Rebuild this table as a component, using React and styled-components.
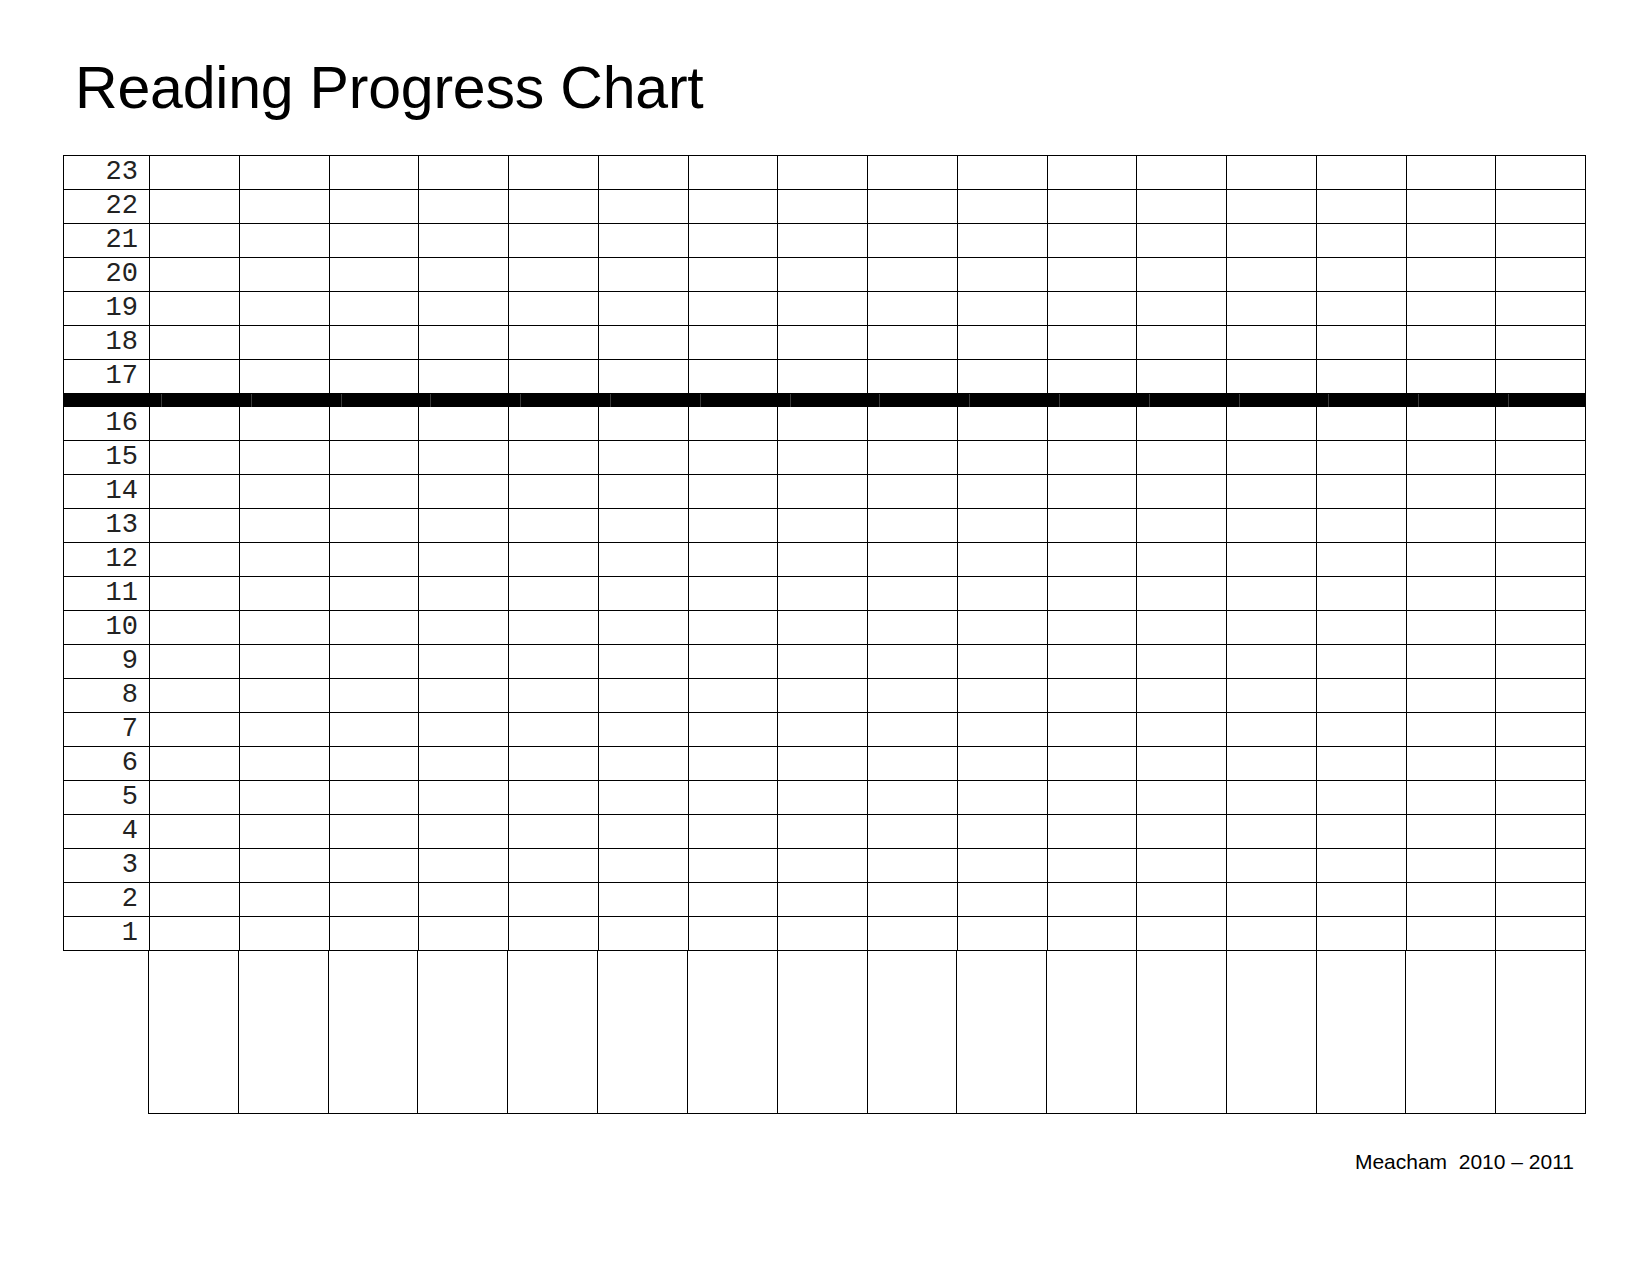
import React from "react";
import styled, { createGlobalStyle } from "styled-components";

const GlobalStyle = createGlobalStyle`
  html, body {
    margin: 0;
    padding: 0;
    background: #fff;
  }
  * {
    box-sizing: border-box;
  }
`;

const Page = styled.div`
  width: 1650px;
  height: 1275px;
  padding: 0 0 0 63px;
  background: #fff;
`;

const Title = styled.h1`
  margin: 0 0 38px 12px;
  padding-top: 59px;
  font-family: "Liberation Sans", Arial, sans-serif;
  font-weight: normal;
  font-size: 59px;
  line-height: 58px;
  color: #000;
  letter-spacing: -0.2px;
`;

const Chart = styled.div`
  width: 1523px;
  border-top: 1px solid #000;
`;

const Row = styled.div`
  display: grid;
  grid-template-columns: 86px repeat(16, 1fr);
  height: 34px;
  border-bottom: 1px solid #000;
  border-left: 1px solid #000;
`;

const Label = styled.div`
  border-right: 1px solid #000;
  padding-right: 11px;
  text-align: right;
  font-family: "Liberation Mono", "Courier New", monospace;
  font-size: 27px;
  line-height: 33px;
  color: #222;
`;

const Cell = styled.div`
  border-right: 1px solid #000;
`;

const Bar = styled.div`
  display: flex;
  height: 13px;
  background: #000;
`;

const BarSeg = styled.div`
  flex: ${(p) => (p.$last ? "1" : "none")};
  width: ${(p) => p.$w}px;
  border-left: ${(p) => (p.$first ? "none" : "1px solid #3a3a3a")};
`;

const Tail = styled.div`
  display: grid;
  grid-template-columns: 86px repeat(16, 1fr);
  height: 163px;
`;

const TailSpacer = styled.div`
  border-right: 1px solid #000;
`;

const TailCell = styled.div`
  border-right: 1px solid #000;
  border-bottom: 1px solid #000;
`;

const Footer = styled.div`
  width: 1523px;
  margin-top: 36px;
  padding-right: 12px;
  text-align: right;
  white-space: pre;
  font-family: "Liberation Sans", Arial, sans-serif;
  font-size: 21px;
  line-height: 24px;
  color: #000;
`;

const cols = Array.from({ length: 16 }, (_, i) => i);
const upper = [23, 22, 21, 20, 19, 18, 17];
const lower = Array.from({ length: 16 }, (_, i) => 16 - i);

function ChartRow({ n }) {
  return (
    <Row>
      <Label>{n}</Label>
      {cols.map((c) => (
        <Cell key={c} />
      ))}
    </Row>
  );
}

export default function App() {
  return (
    <Page>
      <GlobalStyle />
      <Title>Reading Progress Chart</Title>
      <Chart>
        {upper.map((n) => (
          <ChartRow key={n} n={n} />
        ))}
        <Bar>
          <BarSeg $first $w={98} />
          {cols.slice(0, 15).map((c) => (
            <BarSeg key={c} $w={89.8} />
          ))}
          <BarSeg $last />
        </Bar>
        {lower.map((n) => (
          <ChartRow key={n} n={n} />
        ))}
        <Tail>
          <TailSpacer />
          {cols.map((c) => (
            <TailCell key={c} />
          ))}
        </Tail>
      </Chart>
      <Footer>Meacham  2010 – 2011</Footer>
    </Page>
  );
}
